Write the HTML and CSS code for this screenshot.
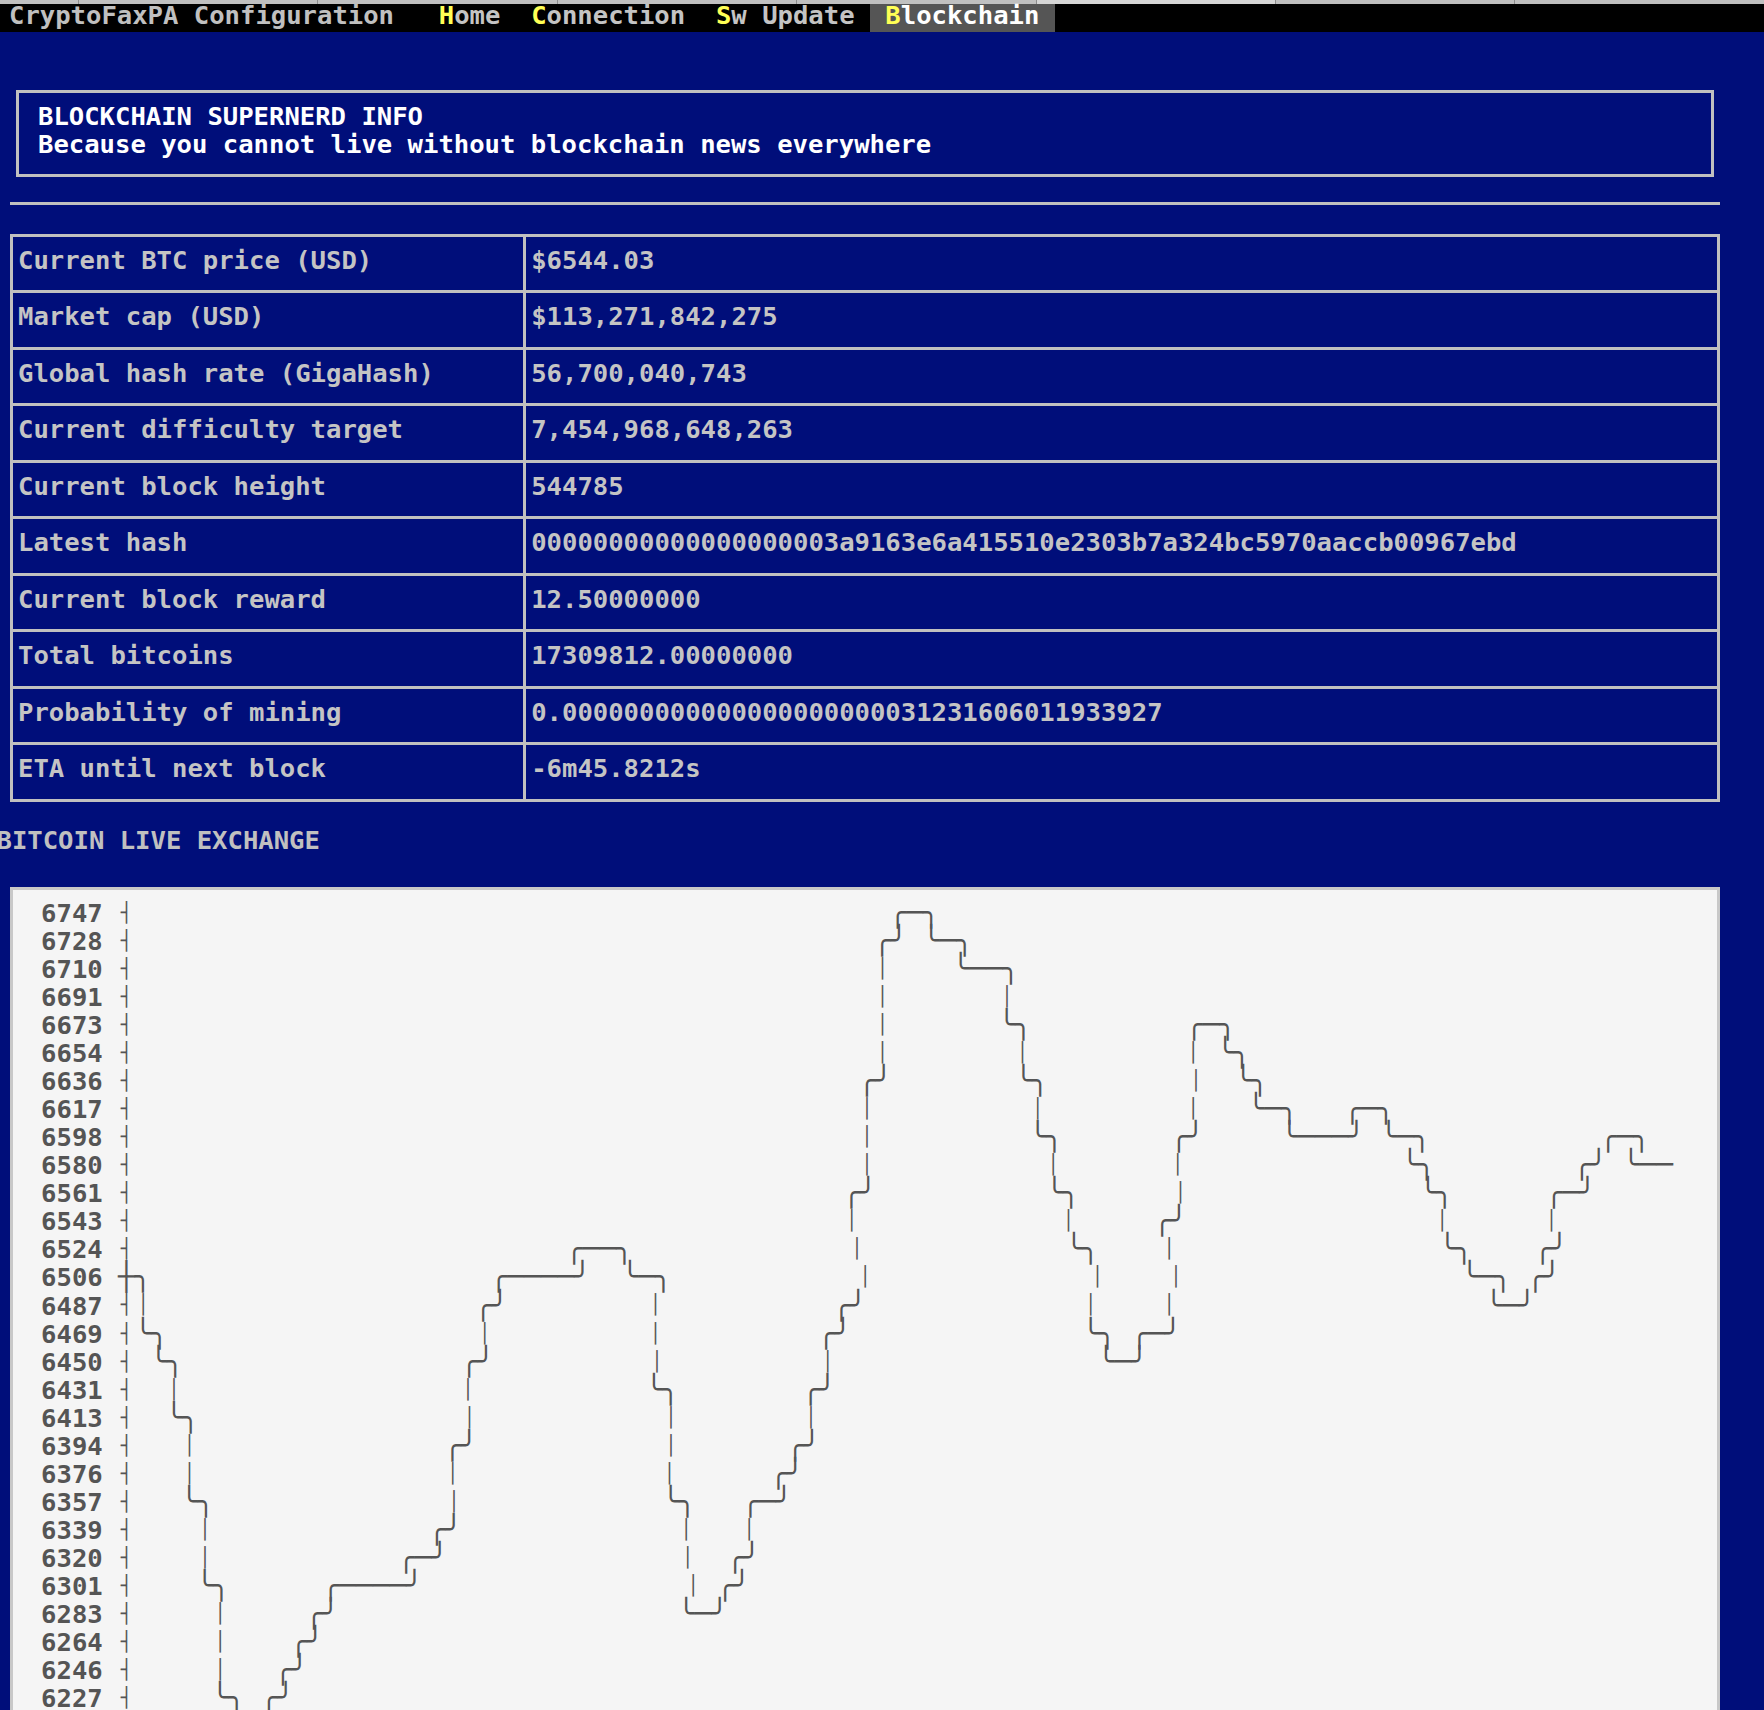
FILE: index.html
```html
<!DOCTYPE html>
<html lang="en">
<head>
<meta charset="utf-8">
<title>CryptoFaxPA Configuration - Blockchain</title>
<link rel="stylesheet" href="styles.css">
</head>
<body>
<div class="tabstrip"><span class="first"></span><span></span><span></span><span></span><span></span><span class="lit"></span><span></span><span></span></div>
<nav class="menubar">
  <span class="brand">CryptoFaxPA Configuration</span>
  <a class="menu-item"><span class="hot">H</span>ome</a>
  <a class="menu-item"><span class="hot">C</span>onnection</a>
  <a class="menu-item"><span class="hot">S</span>w Update</a>
  <a class="menu-item active"><span class="hot">B</span>lockchain</a>
</nav>
<main class="page">
  <div class="banner">
    <div>BLOCKCHAIN SUPERNERD INFO</div>
    <div>Because you cannot live without blockchain news everywhere</div>
  </div>
  <div class="rule"></div>
  <table class="info">
    <tr><td class="k">Current BTC price (USD)</td><td>$6544.03</td></tr>
    <tr><td class="k">Market cap (USD)</td><td>$113,271,842,275</td></tr>
    <tr><td class="k">Global hash rate (GigaHash)</td><td>56,700,040,743</td></tr>
    <tr><td class="k">Current difficulty target</td><td>7,454,968,648,263</td></tr>
    <tr><td class="k">Current block height</td><td>544785</td></tr>
    <tr><td class="k">Latest hash</td><td>00000000000000000003a9163e6a415510e2303b7a324bc5970aaccb00967ebd</td></tr>
    <tr><td class="k">Current block reward</td><td>12.50000000</td></tr>
    <tr><td class="k">Total bitcoins</td><td>17309812.00000000</td></tr>
    <tr><td class="k">Probability of mining</td><td>0.000000000000000000000031231606011933927</td></tr>
    <tr><td class="k">ETA until next block</td><td>-6m45.8212s</td></tr>
  </table>
  <div class="marquee">BITCOIN LIVE EXCHANGE</div>
  <div class="chart"><pre id="chart"></pre></div>
</main>
<script src="script.js"></script>
</body>
</html>
```

FILE: styles.css
```css
html {
  overflow: hidden;
}
html, body {
  margin: 0;
  padding: 0;
}
body {
  background: #000e7a;
  font-family: "DejaVu Sans Mono", monospace;
  font-weight: bold;
  font-size: 25.58px;
  color: #c0c0c0;
}

.tabstrip {
  display: flex;
  height: 4px;
  background: #c0c0c0;
}
.tabstrip span {
  flex: 0 0 239.4px;
  box-sizing: border-box;
  border-left: 1px solid #8c8c8c;
}
.tabstrip span.first {
  flex-basis: 78px;
  border-left: 0;
}
.tabstrip span.lit {
  background: #d6d6d6;
}

.menubar {
  display: flex;
  height: 28px;
  background: #000;
}
.menubar > * {
  display: block;
  height: 28px;
  line-height: 22px;
  white-space: pre;
}
.brand {
  padding-left: 9px;
  margin-right: 29.4px;
  color: #c0c0c0;
}
.menu-item {
  padding: 0 1ch;
  color: #c4c4c4;
}
.menu-item .hot {
  color: #ffff55;
}
.menu-item.active {
  background: #555555;
  color: #ffffff;
}

.page {
  padding-left: 10px;
  width: 1710px;
}

.banner {
  margin: 57.5px 6px 0 5.5px;
  border: 3px solid #c0c0c0;
  padding: 9.7px 0 15.8px 19.5px;
  line-height: 28px;
  color: #ffffff;
}

.rule {
  height: 3px;
  background: #c0c0c0;
  margin-top: 25.2px;
}

.info {
  box-sizing: border-box;
  width: 1710px;
  margin-top: 28.7px;
  border: 3px solid #c0c0c0;
  border-collapse: separate;
  border-spacing: 0;
  color: #c4c4c4;
}
.info td {
  padding: 0 0 6.5px 5px;
  line-height: 47px;
  border-bottom: 3px solid #c0c0c0;
  white-space: nowrap;
}
.info tr:last-child td {
  border-bottom: 0;
}
.info td.k {
  width: 505.2px;
  border-right: 3px solid #c0c0c0;
}

.marquee {
  margin: 24.5px 0 0 -13.5px;
  line-height: 28px;
  white-space: nowrap;
  color: #c0c0c0;
}

.chart {
  margin-top: 32.5px;
  background: #f5f5f5;
  border: 3px solid #c8c8c8;
  border-bottom: 0;
  height: 900px;
}
.chart pre {
  margin: 0;
  padding: 8.8px 0 0 28.1px;
  font-family: "DejaVu Sans Mono", monospace;
  font-weight: bold;
  font-size: 25.58px;
  line-height: 28.06px;
  color: #555555;
}
/* curve corners and horizontals: slightly wider cells than the digits */
.chart .b {
  font-size: 27.84px;
  font-weight: normal;
  line-height: 0;
}
/* vertical strokes: shorter glyphs so they read as dashes, same cell width */
.chart .v {
  font-size: 19px;
  font-weight: normal;
  line-height: 0;
  letter-spacing: 5.32px;
  margin-left: 2.66px;
  margin-right: -2.66px;
  vertical-align: 3.06px;
}
```

FILE: script.js
```js
(function () {
  var v = [13,15,16,18,21,24,28,30,30,28,27,26,25,24,24,24,24,24,23,23,
           22,19,16,14,13,13,13,13,13,12,12,12,13,13,17,21,25,25,24,23,
           21,21,20,19,17,15,14,10,6,1,0,0,1,1,2,2,2,4,6,8,
           10,12,15,16,16,15,15,11,8,4,4,5,6,7,7,8,8,8,8,7,
           7,8,8,9,10,12,13,13,14,14,13,12,10,10,9,8,8,9,9,9];
  var labels = [6747,6728,6710,6691,6673,6654,6636,6617,6598,6580,6561,6543,
                6524,6506,6487,6469,6450,6431,6413,6394,6376,6357,6339,6320,
                6301,6283,6264,6246,6227,6209,6190];
  var rows = labels.length;
  var cols = v.length;
  var grid = [];
  var r, c, x, y;
  for (r = 0; r < rows; r++) {
    var line = [];
    for (c = 0; c < cols; c++) line.push(' ');
    line[0] = '\u2524';
    grid.push(line);
  }
  grid[v[0]][0] = '\u253c';
  for (x = 0; x < cols - 1; x++) {
    var a = v[x], b = v[x + 1];
    c = x + 1;
    if (a === b) {
      grid[a][c] = '\u2500';
    } else {
      var down = b > a;
      grid[a][c] = down ? '\u256e' : '\u256f';
      grid[b][c] = down ? '\u2570' : '\u256d';
      for (y = Math.min(a, b) + 1; y < Math.max(a, b); y++) grid[y][c] = '\u2502';
    }
  }
  function kind(ch) {
    if (ch === ' ') return '';
    if (ch === '\u2502' || ch === '\u2524') return 'v';
    return 'b';
  }
  var pre = document.getElementById('chart');
  for (r = 0; r < rows; r++) {
    pre.appendChild(document.createTextNode(labels[r] + ' '));
    var chars = grid[r];
    var last = chars.length - 1;
    while (last >= 0 && chars[last] === ' ') last--;
    var i = 0;
    while (i <= last) {
      var k = kind(chars[i]);
      var j = i;
      var run = '';
      while (j <= last && kind(chars[j]) === k) { run += chars[j]; j++; }
      if (k === '') {
        pre.appendChild(document.createTextNode(run));
      } else {
        var s = document.createElement('span');
        s.className = k;
        s.textContent = run;
        pre.appendChild(s);
      }
      i = j;
    }
    if (r < rows - 1) pre.appendChild(document.createTextNode('\n'));
  }
})();
```
